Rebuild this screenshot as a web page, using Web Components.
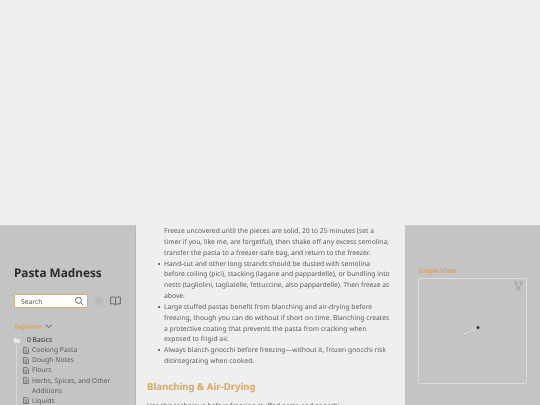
<!DOCTYPE html>
<html>
<head>
<meta charset="utf-8">
<title>Pasta Madness</title>
<style>
    html, body { margin: 0; height: 405px; overflow: hidden; background: #efefef; }
    body { font-family: "Noto Sans", sans-serif; text-rendering: geometricPrecision; }
</style>
</head>
<body>
<pasta-page>
    <side-nav slot="left"></side-nav>
    <article-pane slot="center"></article-pane>
    <graph-panel slot="right"></graph-panel>
</pasta-page>

<script>
// Page shell: blank band on top, three columns below
class PastaPage extends HTMLElement {
    constructor() {
        super();
        const root = this.attachShadow({mode: 'open'});
        root.innerHTML = `
            <style>
                :host { display: block; height: 405px; overflow: hidden; }
                .columns {
                    display: grid;
                    grid-template-columns: 136px 269px 135px;
                    height: 180px;
                    margin-top: 225px;
                    overflow: hidden;
                    filter: blur(.3px);
                }
            </style>
            <div class="columns">
                <slot name="left"></slot>
                <slot name="center"></slot>
                <slot name="right"></slot>
            </div>
        `;
    }
}

class SearchBox extends HTMLElement {
    constructor() {
        super();
        const root = this.attachShadow({mode: 'open'});
        root.innerHTML = `
            <style>
                :host {
                    display: flex;
                    align-items: center;
                    justify-content: space-between;
                    box-sizing: border-box;
                    width: 74px;
                    height: 14px;
                    padding: 0 3px 0 6px;
                    background: #fff;
                    border: 1px solid #dcae7c;
                    border-radius: 1px;
                    font-size: 6.75px;
                    color: #555;
                }
                svg { display: block; }
            </style>
            <span>Search</span>
            <svg width="10" height="10" viewBox="0 0 10 10" fill="none" stroke="#444" stroke-width=".8">
                <circle cx="4.4" cy="4.4" r="3"/>
                <path d="M6.6 6.6 9 9"/>
            </svg>
        `;
    }
}

// One row of the explorer
class TreeItem extends HTMLElement {
    constructor() {
        super();
        const root = this.attachShadow({mode: 'open'});
        root.innerHTML = `
            <style>
                :host {
                    display: flex;
                    gap: 3px;
                    font-size: 6.75px;
                    line-height: 10.15px;
                    color: #5c5c5c;
                }
                svg { flex: none; margin-top: 1.5px; }
            </style>
            <svg width="6" height="7" viewBox="0 0 6 7" fill="none" stroke="#555" stroke-width=".7">
                <path d="M.6.4H3.8L5.4 2V6.6H.6Z"/>
                <path d="M1.8 3H4.2M1.8 4.2H4.2M1.8 5.4H4.2" stroke-width=".5"/>
            </svg>
            <span><slot></slot></span>
        `;
    }
}

class FileTree extends HTMLElement {
    constructor() {
        super();
        const root = this.attachShadow({mode: 'open'});
        root.innerHTML = `
            <style>
                :host { display: block; font-size: 6.75px; line-height: 10.15px; }
                .folder { display: flex; align-items: center; color: #2b2b2b; }
                .folder svg { margin-right: 7px; }
                .children {
                    margin-left: 2px;
                    padding-left: 6px;
                    border-left: 1px solid #d6d6d6;
                }
            </style>
            <div class="folder">
                <svg width="6" height="5" viewBox="0 0 6 5"><path d="M0 0H2.4L3 1H6V5H0Z" fill="#e8e8e8"/></svg>
                <span>0 Basics</span>
            </div>
            <div class="children"><slot></slot></div>
        `;
    }
}

class SideNav extends HTMLElement {
    constructor() {
        super();
        const root = this.attachShadow({mode: 'open'});
        root.innerHTML = `
            <style>
                :host {
                    display: block;
                    box-sizing: border-box;
                    width: 136px;
                    padding: 39px 0 0 14px;
                    background: #c4c4c4;
                    border-right: 1px solid #dcae7c;
                    overflow: hidden;
                }
                h1 {
                    margin: 0 0 12px;
                    font-size: 11.8px;
                    line-height: 18px;
                    font-weight: 700;
                    color: #2b2b2b;
                }
                .tools { display: flex; align-items: center; gap: 6px; margin-bottom: 13px; }
                svg { display: block; }
                .explorer {
                    display: flex;
                    align-items: center;
                    gap: 3px;
                    margin-bottom: 3px;
                    font-size: 6.75px;
                    line-height: 11px;
                    font-weight: 700;
                    color: #d9a55f;
                }
            </style>
            <h1>Pasta Madness</h1>
            <div class="tools">
                <search-box></search-box>
                <svg width="10" height="10" viewBox="0 0 10 10" fill="none" stroke="#9a9a9a" stroke-width=".6">
                    <circle cx="5" cy="5" r="2"/>
                    <path d="M5 0V1.6M5 8.4V10M0 5H1.6M8.4 5H10M1.5 1.5 2.6 2.6M7.4 7.4 8.5 8.5M1.5 8.5 2.6 7.4M7.4 2.6 8.5 1.5"/>
                </svg>
                <svg width="11" height="10" viewBox="0 0 11 10" fill="none" stroke="#555" stroke-width=".8">
                    <path d="M5.5 1.8C4.5 1 2.5.8.6 1.2V8C2.5 7.6 4.5 7.8 5.5 8.8 6.5 7.8 8.5 7.6 10.4 8V1.2C8.5.8 6.5 1 5.5 1.8ZM5.5 1.8V8.8"/>
                </svg>
            </div>
            <div class="explorer">
                <span>Explorer</span>
                <svg width="8" height="5" viewBox="0 0 8 5" fill="none" stroke="#444" stroke-width=".9"><path d="M1 .8 3.8 3.6 6.6 .8"/></svg>
            </div>
            <file-tree>
                <tree-item>Cooking Pasta</tree-item>
                <tree-item>Dough Notes</tree-item>
                <tree-item>Flours</tree-item>
                <tree-item>Herbs, Spices, and Other Additions</tree-item>
                <tree-item>Liquids</tree-item>
            </file-tree>
        `;
    }
}

class ArticlePane extends HTMLElement {
    constructor() {
        super();
        const root = this.attachShadow({mode: 'open'});
        root.innerHTML = `
            <style>
                :host {
                    display: block;
                    box-sizing: border-box;
                    width: 269px;
                    padding: 1px 13px 0 11px;
                    background: #efefef;
                    font-size: 6.75px;
                    line-height: 10.85px;
                    color: #5c5c5c;
                    overflow: hidden;
                }
                ul { margin: 0; padding: 0 0 0 17px; list-style: none; }
                li::before {
                    content: "";
                    display: inline-block;
                    width: 2px;
                    height: 2px;
                    margin: 0 4px 1px -6px;
                    background: #444;
                    border-radius: 50%;
                }
                .lead { display: block; }
                h2 {
                    margin: 12px 0 7px;
                    font-size: 9.6px;
                    line-height: 15px;
                    font-weight: 700;
                    color: #d9a55f;
                }
                p { margin: 0; white-space: nowrap; }
            </style>
            <ul>
                <span class="lead">Freeze uncovered until the pieces are solid, 20 to 25 minutes (set a
                timer if you, like me, are forgetful), then shake off any excess semolina,
                transfer the pasta to a freezer-safe bag, and return to the freezer.</span>
                <li>Hand-cut and other long strands should be dusted with semolina
                before coiling (pici), stacking (lagane and pappardelle), or bundling into
                nests (tagliolini, tagliatelle, fettuccine, also pappardelle). Then freeze as
                above.</li>
                <li>Large stuffed pastas benefit from blanching and air-drying before
                freezing, though you can do without if short on time. Blanching creates
                a protective coating that prevents the pasta from cracking when
                exposed to frigid air.</li>
                <li>Always blanch gnocchi before freezing—without it, frozen gnocchi risk
                disintegrating when cooked.</li>
            </ul>
            <h2>Blanching &amp; Air-Drying</h2>
            <p>Use this technique before freezing stuffed pasta and gnocchi.</p>
        `;
    }
}

class GraphPanel extends HTMLElement {
    constructor() {
        super();
        const root = this.attachShadow({mode: 'open'});
        root.innerHTML = `
            <style>
                :host {
                    display: block;
                    box-sizing: border-box;
                    width: 135px;
                    padding: 41px 0 0 13px;
                    background: #c4c4c4;
                    overflow: hidden;
                }
                h3 {
                    margin: 0 0 2px;
                    font-size: 6.75px;
                    line-height: 10px;
                    font-weight: 700;
                    color: #d9a55f;
                }
                .graph {
                    position: relative;
                    box-sizing: border-box;
                    width: 109px;
                    height: 106px;
                    border: 1px solid #dbdbdb;
                    border-radius: 2px;
                }
                .graph svg { position: absolute; display: block; }
                .links { left: 0; top: 0; }
                .global { right: 3px; top: 2px; }
            </style>
            <h3>Graph View</h3>
            <div class="graph">
                <svg class="links" width="107" height="104" viewBox="0 0 107 104">
                    <path d="M46.5 54.5 59 48.5" stroke="#e2e2e2" stroke-width=".8"/>
                    <circle cx="46.5" cy="54.5" r="1.5" fill="#f0f0f0" stroke="#7f9a8f" stroke-width=".5"/>
                    <circle cx="59" cy="48.5" r="1.5" fill="#2c3a55"/>
                </svg>
                <svg class="global" width="9" height="10" viewBox="0 0 9 10" fill="none" stroke="#8f8f8f" stroke-width=".6">
                    <circle cx="1.7" cy="1.7" r="1.2"/>
                    <circle cx="7.3" cy="1.7" r="1.2"/>
                    <circle cx="4.5" cy="8" r="1.5"/>
                    <path d="M1.7 2.9C1.7 5 3.5 5 4.5 6.5M7.3 2.9C7.3 5 5.5 5 4.5 6.5"/>
                </svg>
            </div>
        `;
    }
}

customElements.define('search-box', SearchBox);
customElements.define('tree-item', TreeItem);
customElements.define('file-tree', FileTree);
customElements.define('side-nav', SideNav);
customElements.define('article-pane', ArticlePane);
customElements.define('graph-panel', GraphPanel);
customElements.define('pasta-page', PastaPage);
</script>
</body>
</html>
